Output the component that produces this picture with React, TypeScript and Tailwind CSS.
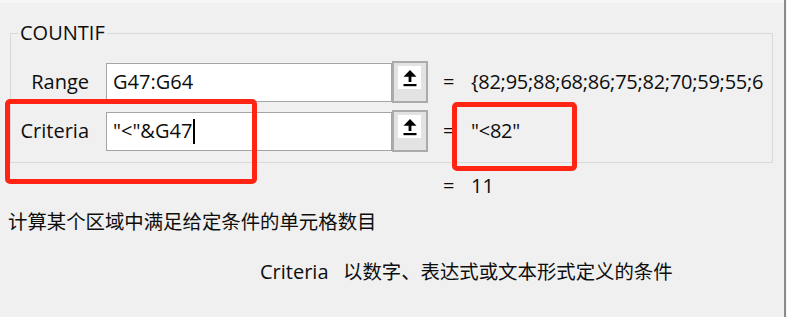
import React from "react";

function UpButton() {
  return (
    <div className="w-[36px] h-[42px] border-2 border-[#ababab] bg-[#e3e3e3] flex flex-col items-start pl-[4px] pt-[3px] shrink-0">
      <div className="w-[23px] h-[23px] bg-white flex items-center justify-center">
        <svg width="16" height="18" viewBox="0 0 16 18">
          <polygon points="8,1 1.5,7.8 6.6,7.8 6.6,13 9.4,13 9.4,7.8 14.5,7.8" fill="#000" />
          <rect x="1.5" y="15" width="13" height="2.2" fill="#000" />
        </svg>
      </div>
    </div>
  );
}

function Row({ label, value, result, caret }: { label: string; value: string; result: string; caret?: boolean }) {
  return (
    <div className="flex items-center h-[42px]">
      <div className="w-[78px] text-right leading-[28px]">{label}</div>
      <div className="ml-[17px] w-[286px] h-[39px] border border-[#a5a5a5] bg-white flex items-center pl-[6px] leading-[28px]">
        <span>{value}</span>
        {caret && <span className="inline-block w-[1.5px] h-[25px] bg-black ml-[1px]" />}
      </div>
      <UpButton />
      <div className="ml-[15px] w-[28px] leading-[28px]">=</div>
      <div className="whitespace-nowrap leading-[28px] tracking-[-0.25px]">{result}</div>
    </div>
  );
}

export default function App() {
  return (
    <div className="w-[787px] h-[317px] bg-[#f0f0f0] flex overflow-hidden relative text-[20px] text-[#0d0d0d] font-['Open_Sans','Noto_Sans_CJK_SC',sans-serif]">
      <div className="flex-1 flex flex-col">
        <div className="h-[3px] bg-[#f6f6f6]" />
        <div className="mt-[30px] ml-[10px] w-[763px] h-[130px] border border-[#d9d9d9] relative flex flex-col pt-[27px] gap-[7px]">
          <div className="absolute -top-[15px] left-[7px] px-[2px] bg-[#f0f0f0] leading-[28px]">COUNTIF</div>
          <Row label="Range" value="G47:G64" result="{82;95;88;68;86;75;82;70;59;55;6" />
          <Row label="Criteria" value={'"<"&G47'} result={'"<82"'} caret />
        </div>
        <div className="mt-[9px] ml-[443px] flex leading-[28px]">
          <span className="w-[28px]">=</span>
          <span>11</span>
        </div>
        <div className="mt-[8px] pl-[8px] leading-[28px] text-[19.4px]">计算某个区域中满足给定条件的单元格数目</div>
        <div className="mt-[22px] pl-[260px] flex leading-[28px]">
          <span className="w-[83px]">Criteria</span>
          <span className="text-[19.4px]">以数字、表达式或文本形式定义的条件</span>
        </div>
      </div>
      <div className="w-[2px] bg-[#8a8a8a]" />
      <div className="w-[1px] bg-[#f4f4f4]" />

      <div className="absolute left-[5px] top-[99px] w-[252px] h-[85px] border-[5px] border-[#ff2414] rounded-[5px]" />
      <div className="absolute left-[452px] top-[102px] w-[125px] h-[69px] border-[5px] border-[#ff2414] rounded-[5px]" />
    </div>
  );
}
